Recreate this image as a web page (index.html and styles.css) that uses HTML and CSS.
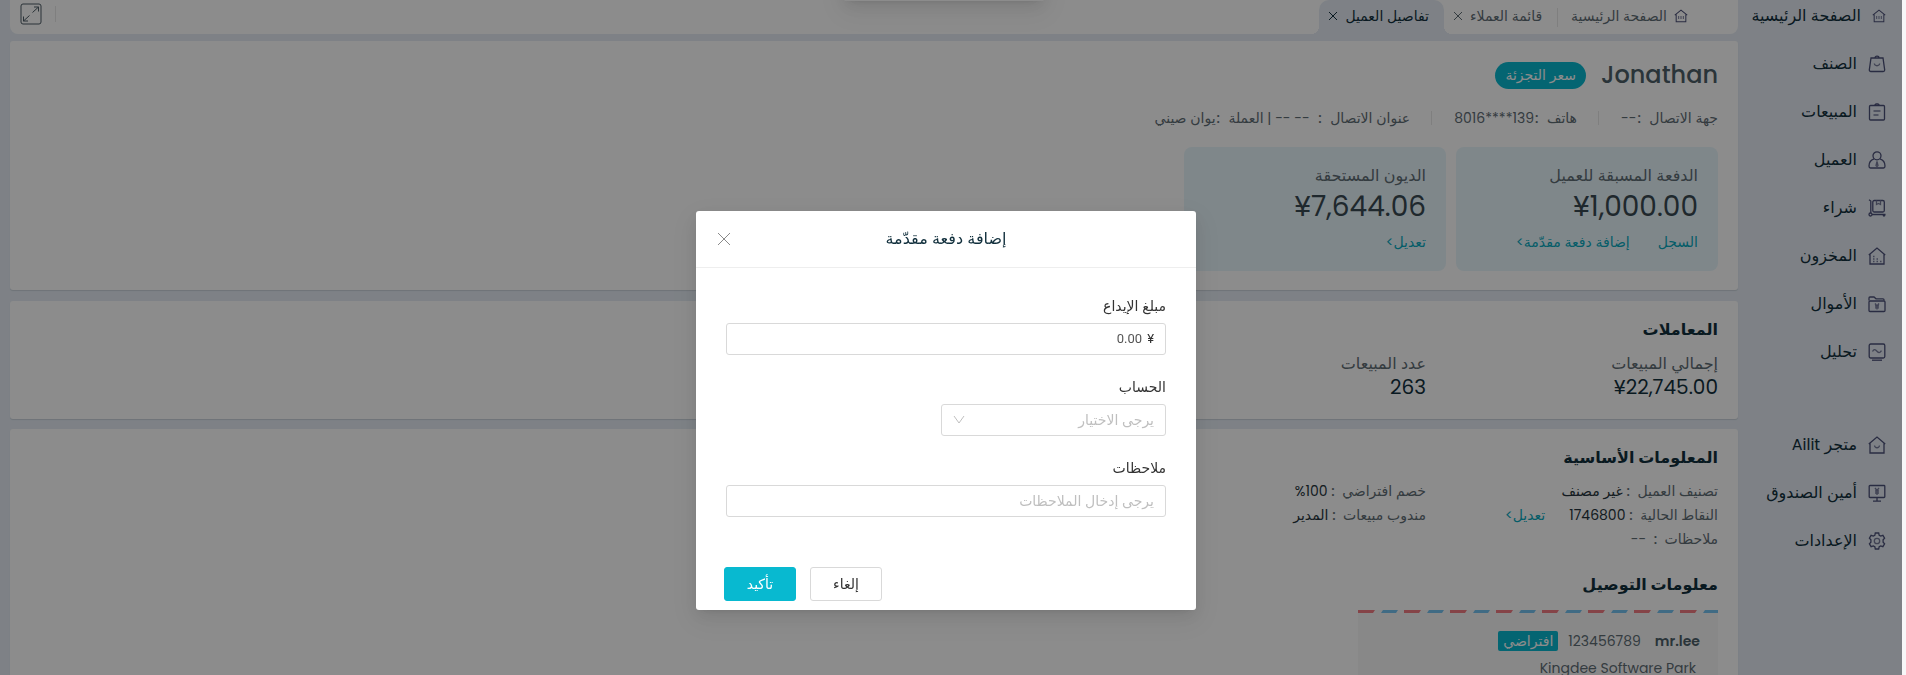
FILE: index.html
```html
<!DOCTYPE html>
<html lang="ar" dir="rtl">
  <head>
    <meta charset="UTF-8" />
    <meta name="viewport" content="width=device-width, initial-scale=1.0" />
    <title>تفاصيل العميل</title>
    <link rel="stylesheet" href="styles.css">
  </head>
  <body>
    <div class="app">
      <nav class="sidebar">
        <a class="navItem navHome" href="#">
          <svg class="icon small" viewBox="0 0 18 18"><path d="M1 8L9 1.500L17 8M2.800 7V16.500H15.200V7"/><path class="thin" d="M6 9v4M9 9v4M12 9v4"/></svg>
          الصفحة الرئيسية
        </a>
        <a class="navItem" href="#">
          <svg class="icon" viewBox="0 0 18 18"><path d="M3 3h12l1.700 12a1.500 1.500 0 0 1-1.500 1.500H2.800A1.500 1.500 0 0 1 1.300 15zM7 3q0-1.800 2-1.800T11 3"/><path class="thin" d="M6.300 8.500c.5 3 4.900 3 5.400 0"/></svg>
          الصنف
        </a>
        <a class="navItem" href="#">
          <svg class="icon" viewBox="0 0 18 18"><rect x="1.500" y="2.500" width="15" height="14.500" rx="1"/><path d="M6.500 2.500l1.500-1.500h2l1.500 1.500"/><path class="thin" d="M5.500 8h7M5.500 12h5"/></svg>
          المبيعات
        </a>
        <a class="navItem" href="#">
          <svg class="icon" viewBox="0 0 18 18"><circle cx="9" cy="4.800" r="4"/><path d="M6 7.800c-3 1-5 4-5 7.200q0 2 1.500 2h13q1.500 0 1.500-2c0-3.200-2-6.200-5-7.200"/><path class="thin" d="M9 10.500l-1 4 1 1 1-1z"/></svg>
          العميل
        </a>
        <a class="navItem" href="#">
          <svg class="icon" viewBox="0 0 18 18"><path d="M1 .8l1.800 1.200V14M4 15.500h13.500"/><circle cx="2.500" cy="15.500" r="1.500"/><circle cx="16" cy="16.300" r=".7"/><rect x="4.800" y="1.500" width="11.500" height="11.500" rx="1.500"/><path class="thin" d="M8.500 1.500v4l2-1 2 1v-4"/></svg>
          شراء
        </a>
        <a class="navItem" href="#">
          <svg class="icon" viewBox="0 0 18 18"><path d="M.8 8L9 1L17.200 8M2 7.500V17H16V7.500"/><path class="thin dots" d="M5 9.500h1.500M5 12h1.500M8.500 12H10M5 14.500h1.500M8.500 14.500H10M12 14.500h1.500"/></svg>
          المخزون
        </a>
        <a class="navItem" href="#">
          <svg class="icon" viewBox="0 0 18 18"><path d="M1 5.500V3q0-1 1-1h4l2 1.800h7q1 0 1 1v.7"/><rect x="1" y="6" width="16" height="10.500" rx="1"/><path class="thin" d="M7 8.500l2 2.500 2-2.500M9 11v3.500M7 11h4M7 12.800h4"/></svg>
          الأموال
        </a>
        <a class="navItem" href="#">
          <svg class="icon" viewBox="0 0 18 18"><rect x="1.200" y="1" width="15.600" height="14" rx="1.500"/><path class="thin" d="M4.500 8.500c1.500-3 3-2 4.500-.3s3 2 4.500-.5"/><path d="M4 17.200h10"/></svg>
          تحليل
        </a>
        <a class="navItem navStore" href="#">
          <svg class="icon" viewBox="0 0 18 18"><path d="M.8 8L9 1L17.200 8M2 7.500V17H16V7.500"/><path class="thin" d="M6.500 9.500c.4 3 4.600 3 5 0"/></svg>
          <span>متجر Ailit</span>
        </a>
        <a class="navItem" href="#">
          <svg class="icon" viewBox="0 0 18 18"><rect x="1.200" y="1.500" width="15.600" height="12" rx=".8"/><path class="thin" d="M7 4l2 2.500 2-2.500M9 6.500V11M7 7h4M7 9h4"/><path d="M9 13.500V17M5 17.200h8"/></svg>
          أمين الصندوق
        </a>
        <a class="navItem" href="#">
          <svg class="icon" viewBox="0 0 18 18"><path d="M7.300 1h3.400l.5 2.300 1.500.8 2.200-.8 1.700 2.800-1.500 1.700v2.400l1.500 1.700-1.700 2.800-2.200-.8-1.500.8-.5 2.300H7.300l-.5-2.300-1.500-.8-2.200.8-1.700-2.800 1.500-1.700V7.800L1.400 6.100l1.700-2.800 2.200.8 1.500-.8z"/><circle class="thin" cx="9" cy="9" r="2.700"/></svg>
          الإعدادات
        </a>
      </nav>

      <main class="main">
        <header class="tabs">
          <a class="tab tabHome" href="#">
            <svg class="icon small" viewBox="0 0 18 18"><path d="M1 8L9 1.500L17 8M2.800 7V16.500H15.200V7"/><path class="thin" d="M6 9v4M9 9v4M12 9v4"/></svg>
            الصفحة الرئيسية
          </a>
          <div class="tab">
            قائمة العملاء
            <button class="tabClose" aria-label="إغلاق"><svg viewBox="0 0 10 10"><path d="M1 1L9 9M9 1L1 9"/></svg></button>
          </div>
          <div class="tab active">
            تفاصيل العميل
            <button class="tabClose" aria-label="إغلاق"><svg viewBox="0 0 10 10"><path d="M1 1L9 9M9 1L1 9"/></svg></button>
          </div>
          <div class="tools">
            <button class="expand" aria-label="ملء الشاشة">
              <svg viewBox="0 0 22 22"><rect x="1" y="1" width="20" height="20" rx="2"/><path d="M12.500 9.500L18.500 4M14 4h4.500v4.500M9.500 12.500L3.500 18M8 18H3.500v-4.500"/></svg>
            </button>
          </div>
        </header>

        <section class="card profile">
          <div class="nameRow">
            <h1>Jonathan</h1>
            <span class="badge">سعر التجزئة</span>
          </div>
          <div class="contact">
            <span class="contactItem">جهة الاتصال&nbsp; <b>:</b>--</span>
            <span class="contactItem">هاتف&nbsp; <b>:</b>139****8016</span>
            <span class="contactItem">عنوان الاتصال&nbsp; <b>:</b>&nbsp; -- -- | العملة&nbsp; <b>:</b>يوان صيني</span>
          </div>
          <div class="balances">
            <div class="balance">
              <div class="label">الدفعة المسبقة للعميل</div>
              <div class="amount">¥1,000.00</div>
              <div class="links"><a href="#">السجل</a><a href="#">إضافة دفعة مقدّمة&gt;</a></div>
            </div>
            <div class="balance">
              <div class="label">الديون المستحقة</div>
              <div class="amount">¥7,644.06</div>
              <div class="links"><a href="#">تعديل&gt;</a></div>
            </div>
          </div>
        </section>

        <section class="card deals">
          <h2>المعاملات</h2>
          <div class="columns">
            <div>
              <div class="label">إجمالي المبيعات</div>
              <div class="total">¥22,745.00</div>
            </div>
            <div>
              <div class="label">عدد المبيعات</div>
              <div class="total">263</div>
            </div>
          </div>
        </section>

        <section class="card info">
          <h2>المعلومات الأساسية</h2>
          <div class="columns details">
            <div>تصنيف العميل&nbsp; <b>:</b>&nbsp;<span class="value">غير مصنف</span></div>
            <div>خصم افتراضي&nbsp; <b>:</b>&nbsp;<span class="value" dir="ltr">%100</span></div>
            <div>النقاط الحالية&nbsp; <b>:</b>&nbsp;<span class="value">1746800</span><a class="edit" href="#">تعديل&gt;</a></div>
            <div>مندوب مبيعات&nbsp; <b>:</b>&nbsp;<span class="value">المدير</span></div>
            <div>ملاحظات&nbsp; <b>:</b>&nbsp; --</div>
          </div>
          <h2>معلومات التوصيل</h2>
          <div class="address">
            <svg class="stripes" viewBox="0 0 360 3" preserveAspectRatio="none">
              <defs>
                <pattern id="airmail" width="46" height="3" patternUnits="userSpaceOnUse">
                  <path fill="#f27d84" d="M-2 0H17L15 3H-4z"/>
                  <path fill="#76c3f0" d="M25 0H40L38 3H23z"/>
                </pattern>
              </defs>
              <rect width="360" height="3" fill="url(#airmail)"/>
            </svg>
            <div class="person">
              <strong>mr.lee</strong>
              <span>123456789</span>
              <span class="tag">افتراضي</span>
            </div>
            <div class="street">Kingdee Software Park</div>
          </div>
        </section>
      </main>
    </div>

    <div class="mask">
      <div class="message"></div>
      <form class="modal" role="dialog" aria-labelledby="modalTitle">
        <div class="modalHeader">
          <span id="modalTitle">إضافة دفعة مقدّمة</span>
          <button type="button" class="modalClose" aria-label="إغلاق"><svg viewBox="0 0 14 14"><path d="M1 1L13 13M13 1L1 13"/></svg></button>
        </div>
        <div class="modalBody">
          <div class="field">
            <label for="amount">مبلغ الإيداع</label>
            <div class="control money">
              <span>¥</span>
              <input id="amount" type="text" value="0.00">
            </div>
          </div>
          <div class="field">
            <label for="account">الحساب</label>
            <div class="control short">
              <select id="account">
                <option>يرجى الاختيار</option>
              </select>
              <svg class="arrow" viewBox="0 0 12 12"><path d="M1 2L6 9L11 2"/></svg>
            </div>
          </div>
          <div class="field">
            <label for="notes">ملاحظات</label>
            <div class="control">
              <input id="notes" type="text" placeholder="يرجى إدخال الملاحظات">
            </div>
          </div>
        </div>
        <div class="modalFooter">
          <button type="button" class="btn">إلغاء</button>
          <button type="submit" class="btn primary">تأكيد</button>
        </div>
      </form>
    </div>
  </body>
</html>
```
FILE: styles.css
```css
* {
  box-sizing: border-box;
}
body {
  margin: 0;
  background: #f7f7f8;
  color: #12303d;
  font-family: Poppins, Inter, "DejaVu Sans", sans-serif;
  font-size: 14px;
  line-height: 20px;
}
a {
  color: inherit;
  text-decoration: none;
}
button {
  padding: 0;
  border: 0;
  background: none;
  font: inherit;
  color: inherit;
}
svg {
  display: block;
  fill: none;
  stroke: currentColor;
}
h1,
h2 {
  margin: 0;
}
b {
  font-weight: 500;
}
.app {
  display: flex;
  height: 100vh;
  margin-right: 4px;
  overflow: hidden;
  background: #e5ecf4;
}

/* sidebar */
.sidebar {
  flex: none;
  width: 164px;
  font-size: 16px;
}
.navItem {
  display: flex;
  align-items: center;
  gap: 11px;
  height: 48px;
  padding-right: 16px;
  white-space: nowrap;
}
.navHome {
  height: 32px;
  margin-bottom: 8px;
}
.navStore {
  margin-top: 45px;
}
.icon {
  flex: none;
  width: 18px;
  height: 18px;
  color: #4c5078;
  stroke-width: 1.3;
}
.icon.small {
  width: 14px;
  height: 14px;
}
.thin {
  stroke: #777b9a;
}
.dots {
  stroke-width: 1.5;
}

/* tabs */
.main {
  flex: 1;
  min-width: 0;
  padding-left: 10px;
}
.tabs {
  display: flex;
  height: 34px;
  padding-right: 50px;
  margin-bottom: 7px;
  background: white;
  border-radius: 0 0 8px 8px;
}
.tab {
  position: relative;
  display: flex;
  align-items: center;
  gap: 7px;
  padding: 0 15px 2px 9px;
  color: #5f6d75;
  white-space: nowrap;
}
.tabHome {
  padding-right: 0;
  padding-left: 14px;
}
.tabHome::after {
  content: "";
  position: absolute;
  left: 0;
  top: 8px;
  height: 19px;
  border-left: 1px solid #e8e8e8;
}
.tab.active {
  background: #e5ecf4;
  color: #12303d;
  border-radius: 10px 10px 0 0;
}
.tab.active::before,
.tab.active::after {
  content: "";
  position: absolute;
  bottom: 0;
  width: 8px;
  height: 8px;
}
.tab.active::before {
  right: -8px;
  background: radial-gradient(circle at 100% 0, transparent 8px, #e5ecf4 8px);
}
.tab.active::after {
  left: -8px;
  background: radial-gradient(circle at 0 0, transparent 8px, #e5ecf4 8px);
}
.tabClose svg {
  width: 10px;
  height: 10px;
}
.tools {
  display: flex;
  align-items: center;
  height: 16px;
  margin: 6px auto 0 10px;
}
.tools::before {
  content: "";
  height: 16px;
  margin-left: 13px;
  border-left: 1px solid #e8e8e8;
}
.expand svg {
  width: 22px;
  height: 22px;
  color: #4e5d66;
}

/* cards */
.card {
  margin-bottom: 11px;
  padding: 19px 20px;
  background: white;
  border-radius: 3px;
  box-shadow: 0 1px 1px #c9d2da;
}
.card h2 {
  font-size: 16px;
  font-weight: 600;
  line-height: 20px;
}
.profile {
  padding-top: 20px;
}
.nameRow {
  display: flex;
  align-items: center;
  gap: 15px;
  height: 28px;
}
.nameRow h1 {
  color: #4d5f69;
  font-size: 24px;
  font-weight: 500;
}
.badge {
  padding: 0 10px;
  background: #08b9d0;
  color: white;
  border-radius: 14px;
  line-height: 27px;
}
.contact {
  display: flex;
  margin: 19px 0;
  color: #5f6d75;
  white-space: nowrap;
}
.contact b {
  padding: 0 1px;
}
.contactItem + .contactItem {
  margin-right: 22px;
  padding-right: 22px;
  background: linear-gradient(#e8e8e8, #e8e8e8) right / 1px 14px no-repeat;
}
.balances {
  display: flex;
  gap: 10px;
}
.balance {
  width: 262px;
  height: 124px;
  padding: 19px 20px;
  background: #e8f6fc;
  border-radius: 8px;
}
.label {
  color: #5f6d75;
  font-size: 16px;
}
.amount {
  color: #3a4a52;
  font-size: 28px;
  line-height: 42px;
}
.links {
  display: flex;
  gap: 28px;
  margin-top: 4px;
  color: #08a9be;
}
.deals {
  margin-bottom: 10px;
}
.deals .columns {
  margin-top: 14px;
}
.columns {
  display: grid;
  grid-template-columns: 292px 292px;
}
.total {
  font-size: 20px;
  line-height: 26px;
}
.details {
  row-gap: 4px;
  margin: 13px 0 26px;
  color: #5f6d75;
}
.value {
  color: #26343c;
}
.edit {
  margin-right: 24px;
  color: #08a9be;
}
.address {
  width: 360px;
  height: 120px;
  margin-top: 15px;
  background: #f8f8f8;
  color: #5f6d75;
}
.stripes {
  width: 100%;
  height: 3px;
  stroke: none;
}
.person {
  display: flex;
  align-items: center;
  gap: 10px;
  padding: 18px 18px 0;
}
.person strong {
  margin-left: 4px;
  color: #4d5f69;
  font-weight: 600;
}
.tag {
  padding: 0 5px;
  background: #08b9d0;
  color: white;
  border-radius: 2px;
}
.street {
  padding: 7px 22px;
}

/* modal */
.mask {
  position: fixed;
  inset: 0 4px 0 0;
  padding-right: 10px;
  overflow: hidden;
  background: rgba(0, 0, 0, 0.45);
}
.message {
  position: absolute;
  left: 50%;
  top: -39px;
  width: 200px;
  height: 40px;
  margin-left: -107px;
  border-radius: 2px;
}
.message,
.modal {
  box-shadow: 0 3px 6px -4px rgba(0, 0, 0, 0.12),
    0 6px 16px rgba(0, 0, 0, 0.08), 0 9px 28px 8px rgba(0, 0, 0, 0.05);
}
.modal {
  width: 500px;
  margin: 211px auto 0;
  background: white;
  border-radius: 3px;
}
.modalHeader {
  position: relative;
  height: 57px;
  border-bottom: 1px solid #eeeeee;
  font-size: 16px;
  line-height: 56px;
  text-align: center;
}
.modalClose {
  position: absolute;
  left: 21px;
  top: 21px;
}
.modalClose svg {
  width: 14px;
  height: 14px;
  color: #8a8a8a;
}
.modalBody {
  padding: 28px 30px 50px;
  color: #333333;
}
.field + .field {
  margin-top: 22px;
}
.field label {
  display: block;
  margin-bottom: 7px;
}
.control {
  display: flex;
  align-items: center;
  gap: 5px;
  height: 32px;
  padding: 0 11px;
  border: 1px solid #d9d9d9;
  border-radius: 3px;
}
.control.short {
  width: 225px;
}
.control.money {
  font-family: Roboto, sans-serif;
  font-size: 13px;
}
.control input,
.control select {
  flex: 1;
  min-width: 0;
  padding: 0;
  border: 0;
  outline: 0;
  background: none;
  color: #555555;
  font: inherit;
}
.control select {
  appearance: none;
  color: #bfbfbf;
}
.control input::placeholder {
  color: #bfbfbf;
}
.arrow {
  width: 12px;
  height: 12px;
  color: #bfbfbf;
}
.modalFooter {
  display: flex;
  justify-content: flex-end;
  gap: 14px;
  padding: 0 28px 9px;
}
.btn {
  width: 72px;
  height: 34px;
  border: 1px solid #d9d9d9;
  border-radius: 3px;
  color: #333333;
}
.btn.primary {
  background: #08b9d0;
  border-color: #08b9d0;
  color: white;
}
```
